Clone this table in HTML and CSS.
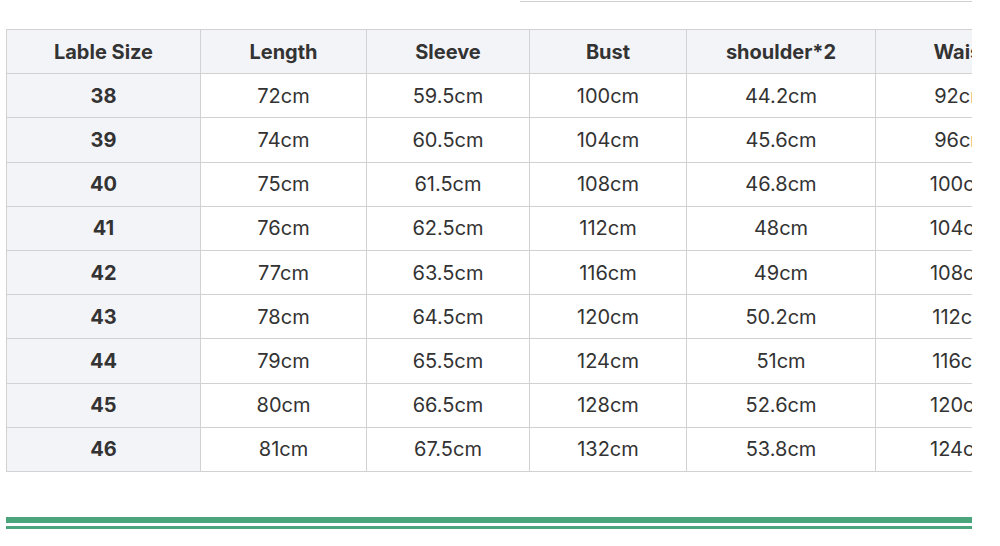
FILE: index.html
```html
<!DOCTYPE html>
<html>
<head>
<meta charset="utf-8">
<link rel="stylesheet" href="styles.css">
</head>
<body>
<div class="page">
  <div class="topline"></div>
  <div class="table-wrap">
    <table class="size-table">
      <colgroup>
        <col class="c1"><col class="c2"><col class="c3"><col class="c4"><col class="c5"><col class="c6">
      </colgroup>
      <thead>
        <tr><th>Lable Size</th><th>Length</th><th>Sleeve</th><th>Bust</th><th>shoulder*2</th><th>Waist</th></tr>
      </thead>
      <tbody>
        <tr><th>38</th><td>72cm</td><td>59.5cm</td><td>100cm</td><td>44.2cm</td><td>92cm</td></tr>
        <tr><th>39</th><td>74cm</td><td>60.5cm</td><td>104cm</td><td>45.6cm</td><td>96cm</td></tr>
        <tr><th>40</th><td>75cm</td><td>61.5cm</td><td>108cm</td><td>46.8cm</td><td>100cm</td></tr>
        <tr><th>41</th><td>76cm</td><td>62.5cm</td><td>112cm</td><td>48cm</td><td>104cm</td></tr>
        <tr><th>42</th><td>77cm</td><td>63.5cm</td><td>116cm</td><td>49cm</td><td>108cm</td></tr>
        <tr><th>43</th><td>78cm</td><td>64.5cm</td><td>120cm</td><td>50.2cm</td><td>112cm</td></tr>
        <tr><th>44</th><td>79cm</td><td>65.5cm</td><td>124cm</td><td>51cm</td><td>116cm</td></tr>
        <tr><th>45</th><td>80cm</td><td>66.5cm</td><td>128cm</td><td>52.6cm</td><td>120cm</td></tr>
        <tr><th>46</th><td>81cm</td><td>67.5cm</td><td>132cm</td><td>53.8cm</td><td>124cm</td></tr>
      </tbody>
    </table>
  </div>
  <div class="divider">
    <div class="bar-thick"></div>
    <div class="bar-thin"></div>
  </div>
</div>
</body>
</html>
```
FILE: styles.css
```css
html, body {
  margin: 0;
  padding: 0;
  background: #fff;
}
body {
  font-family: Inter, "Liberation Sans", sans-serif;
  color: #333;
}
.page {
  width: 966px;
  margin-left: 6px;
  display: flex;
  flex-direction: column;
}
.topline {
  align-self: flex-end;
  width: 452px;
  height: 1px;
  background: #cfcfcf;
  margin-top: 1px;
}
.table-wrap {
  margin-top: 27px;
  overflow: hidden;
  width: 966px;
}
.size-table {
  border-collapse: collapse;
  table-layout: fixed;
  width: 1040px;
}
.c1 { width: 194px; }
.c2 { width: 166px; }
.c3 { width: 163px; }
.c4 { width: 157px; }
.c5 { width: 189px; }
.c6 { width: 171px; }
.size-table th,
.size-table td {
  border: 1px solid #d2d2d2;
  height: 43.2px;
  padding: 0;
  text-align: center;
  font-size: 20px;
  color: #333;
}
.size-table th {
  font-weight: 700;
  background: #f3f4f8;
}
.size-table td {
  font-weight: 400;
  background: #fff;
}
.divider {
  margin-top: 45px;
  display: flex;
  flex-direction: column;
  gap: 3px;
}
.bar-thick {
  height: 6px;
  background: #4aa57d;
}
.bar-thin {
  height: 3px;
  background: #4aa57d;
}
```
